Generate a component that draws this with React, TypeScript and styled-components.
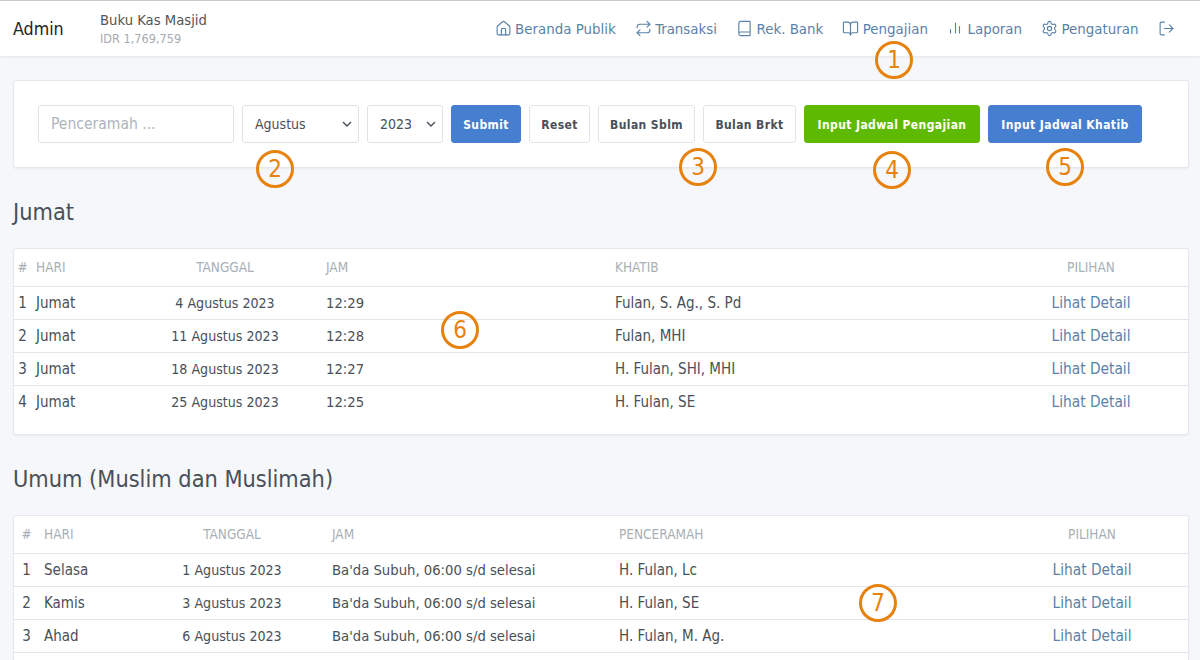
import styled, { createGlobalStyle } from 'styled-components'
import { House, Repeat, Book, BookOpen, Settings, LogOut } from 'lucide-react'
import type { ReactNode } from 'react'

const jumat = [
  ['1', 'Jumat', '4 Agustus 2023', '12:29', 'Fulan, S. Ag., S. Pd'],
  ['2', 'Jumat', '11 Agustus 2023', '12:28', 'Fulan, MHI'],
  ['3', 'Jumat', '18 Agustus 2023', '12:27', 'H. Fulan, SHI, MHI'],
  ['4', 'Jumat', '25 Agustus 2023', '12:25', 'H. Fulan, SE'],
]

const umum = [
  ['1', 'Selasa', '1 Agustus 2023', "Ba'da Subuh, 06:00 s/d selesai", 'H. Fulan, Lc'],
  ['2', 'Kamis', '3 Agustus 2023', "Ba'da Subuh, 06:00 s/d selesai", 'H. Fulan, SE'],
  ['3', 'Ahad', '6 Agustus 2023', "Ba'da Subuh, 06:00 s/d selesai", 'H. Fulan, M. Ag.'],
]

const chevron =
  "data:image/svg+xml,%3Csvg xmlns='http://www.w3.org/2000/svg' width='10' height='6' viewBox='0 0 10 6'%3E%3Cpath d='M1 1l4 4 4-4' fill='none' stroke='%23495057' stroke-width='1.4'/%3E%3C/svg%3E"

function BarsIcon() {
  return (
    <svg width="17" height="17" viewBox="0 0 17 17" fill="none" stroke="currentColor" strokeWidth="1.1" strokeLinecap="round">
      <path d="M3.5 9.5v3.5M8.5 3v10M12.5 6.5v6.5" />
    </svg>
  )
}

function NavItem({ icon, label }: { icon: ReactNode; label?: string }) {
  return (
    <NavLink>
      {icon}
      {label}
    </NavLink>
  )
}

function DataTable({ widths, person, rows, continues }: { widths: number[]; person: string; rows: string[][]; continues?: boolean }) {
  return (
    <TableCard>
      <Table>
        <colgroup>
          {widths.map((w, i) => <col key={i} width={w} />)}
        </colgroup>
        <thead>
          <tr>
            <Head $align="center">#</Head>
            <Head>HARI</Head>
            <Head $align="center">TANGGAL</Head>
            <Head>JAM</Head>
            <Head>{person}</Head>
            <Head $align="center">PILIHAN</Head>
          </tr>
        </thead>
        <tbody>
          {rows.map((r, i) => {
            const last = !continues && i === rows.length - 1
            return (
              <tr key={r[0]}>
                <Cell $align="center" $last={last}>{r[0]}</Cell>
                <Cell $last={last}>{r[1]}</Cell>
                <Cell $align="center" $last={last} $size={14.1}>{r[2]}</Cell>
                <Cell $last={last} $size={14.7}>{r[3]}</Cell>
                <Cell $last={last}>{r[4]}</Cell>
                <Cell $align="center" $last={last}><DetailLink>Lihat Detail</DetailLink></Cell>
              </tr>
            )
          })}
        </tbody>
      </Table>
    </TableCard>
  )
}

export default function App() {
  return (
    <>
      <GlobalStyle />
      <Page>
        <NavBar>
          <Brand>Admin</Brand>
          <Account>
            <AccountName>Buku Kas Masjid</AccountName>
            <AccountBalance>IDR 1,769,759</AccountBalance>
          </Account>
          <NavLinks>
            <NavItem icon={<House size={17} strokeWidth={1.6} />} label="Beranda Publik" />
            <NavItem icon={<Repeat size={17} strokeWidth={1.6} />} label="Transaksi" />
            <NavItem icon={<Book size={17} strokeWidth={1.6} />} label="Rek. Bank" />
            <NavItem icon={<BookOpen size={17} strokeWidth={1.6} />} label="Pengajian" />
            <NavItem icon={<BarsIcon />} label="Laporan" />
            <NavItem icon={<Settings size={17} strokeWidth={1.6} />} label="Pengaturan" />
            <NavItem icon={<LogOut size={17} strokeWidth={1.6} />} />
          </NavLinks>
        </NavBar>

        <Content>
          <FilterCard>
            <TextInput placeholder="Penceramah ..." />
            <Select $width={117}>
              <option>Agustus</option>
            </Select>
            <Select $width={76}>
              <option>2023</option>
            </Select>
            <Button $width={70} $variant="blue">Submit</Button>
            <Button $width={61}>Reset</Button>
            <Button $width={97}>Bulan Sblm</Button>
            <Button $width={93}>Bulan Brkt</Button>
            <Button $width={176} $variant="green">Input Jadwal Pengajian</Button>
            <Button $width={154} $variant="blue">Input Jadwal Khatib</Button>
          </FilterCard>

          <SectionTitle>Jumat</SectionTitle>
          <DataTable widths={[17, 98, 192, 289, 384, 194]} person="KHATIB" rows={jumat} />

          <SectionTitle>Umum (Muslim dan Muslimah)</SectionTitle>
          <DataTable widths={[25, 98, 190, 287, 382, 192]} person="PENCERAMAH" rows={umum} continues />
        </Content>

        <Marker $x={894} $y={60}>1</Marker>
        <Marker $x={275} $y={169}>2</Marker>
        <Marker $x={698} $y={167}>3</Marker>
        <Marker $x={892} $y={170}>4</Marker>
        <Marker $x={1065} $y={167}>5</Marker>
        <Marker $x={460} $y={330}>6</Marker>
        <Marker $x={878} $y={603}>7</Marker>
      </Page>
    </>
  )
}

const GlobalStyle = createGlobalStyle`
  html, body {
    margin: 0;
    height: 660px;
    overflow: hidden;
    background: #f5f7fb;
  }
  body {
    font-family: "DejaVu Sans", sans-serif;
    font-stretch: condensed;
    font-size: 15px;
    color: #495057;
  }
  * {
    box-sizing: border-box;
  }
`

const Page = styled.div`
  position: relative;
  height: 660px;
  overflow: hidden;
`

const NavBar = styled.header`
  display: flex;
  align-items: center;
  height: 56px;
  padding: 0 13px;
  background: #fff;
  border-top: 1px solid #c8c8c8;
  box-shadow: 0 1px 3px rgba(0, 0, 0, 0.08);
`

const Brand = styled.div`
  width: 87px;
  font-size: 17.7px;
  color: #222;
`

const Account = styled.div`
  display: flex;
  flex-direction: column;
  gap: 3px;
`

const AccountName = styled.div`
  font-size: 14.7px;
  color: #555;
`

const AccountBalance = styled.div`
  font-size: 12.6px;
  color: #a5abb2;
`

const NavLinks = styled.nav`
  display: flex;
  align-items: center;
  gap: 19px;
  margin-left: auto;
  padding-right: 12.5px;
`

const NavLink = styled.a`
  display: flex;
  align-items: center;
  gap: 3.5px;
  font-size: 14.9px;
  color: #5a82a8;
`

const Content = styled.main`
  padding: 24px 11px 0 13px;
`

const FilterCard = styled.section`
  display: flex;
  gap: 8px;
  height: 88px;
  align-items: center;
  padding: 0 24px;
  background: #fff;
  border: 1px solid #e6e8ec;
  border-radius: 3px;
  box-shadow: 0 1px 2px rgba(0, 0, 0, 0.05);
`

const TextInput = styled.input`
  flex: none;
  width: 196px;
  height: 38px;
  padding: 0 12px;
  border: 1px solid #dfe2e6;
  border-radius: 3px;
  font: inherit;
  color: #495057;
  &::placeholder {
    font-size: 15.5px;
    color: #adb5bd;
  }
`

const Select = styled.select<{ $width: number }>`
  flex: none;
  appearance: none;
  width: ${(p) => p.$width}px;
  height: 38px;
  padding: 0 12px;
  border: 1px solid #dfe2e6;
  border-radius: 3px;
  background: #fff url("${chevron}") no-repeat right 6px center;
  font: inherit;
  font-size: 14px;
  color: #495057;
`

const Button = styled.button<{ $variant?: 'blue' | 'green'; $width: number }>`
  flex: none;
  width: ${(p) => p.$width}px;
  height: 38px;
  padding: 1px 0 0;
  border: 1px solid ${(p) => (p.$variant === 'blue' ? '#467fcf' : p.$variant === 'green' ? '#5eba00' : '#e2e4e8')};
  border-radius: 3px;
  background: ${(p) => (p.$variant === 'blue' ? '#467fcf' : p.$variant === 'green' ? '#5eba00' : '#fff')};
  color: ${(p) => (p.$variant ? '#fff' : '#495057')};
  font: inherit;
  font-size: 12px;
  font-weight: 700;
  letter-spacing: 0.4px;
  white-space: nowrap;
`

const SectionTitle = styled.h2`
  margin: 30px 0 22px;
  font-size: 23.3px;
  font-weight: 400;
  line-height: 28px;
  color: #495057;
`

const TableCard = styled.section`
  padding-bottom: 16px;
  background: #fff;
  border: 1px solid #e6e8ec;
  border-radius: 3px;
  box-shadow: 0 1px 2px rgba(0, 0, 0, 0.05);
`

const Table = styled.table`
  width: 100%;
  table-layout: fixed;
  border-collapse: collapse;
`

const Head = styled.th<{ $align?: string }>`
  height: 37px;
  padding: 0 ${(p) => (p.$align ? '0' : '5px')};
  border-bottom: 1px solid #e3e5e9;
  text-align: ${(p) => p.$align || 'left'};
  font-size: 13.5px;
  font-weight: 400;
  color: #a9afb6;
`

const Cell = styled.td<{ $align?: string; $last?: boolean; $size?: number }>`
  height: 33px;
  padding: 0 ${(p) => (p.$align ? '0' : '5px')};
  text-align: ${(p) => p.$align || 'left'};
  border-bottom: ${(p) => (p.$last ? 'none' : '1px solid #e3e5e9')};
  font-size: ${(p) => p.$size || 15}px;
`

const DetailLink = styled.a`
  color: #5a82a8;
  font-size: 15.3px;
`

const Marker = styled.div<{ $x: number; $y: number }>`
  position: absolute;
  left: ${(p) => p.$x - 19}px;
  top: ${(p) => p.$y - 19}px;
  width: 38px;
  height: 38px;
  display: flex;
  align-items: center;
  justify-content: center;
  border: 3px solid #e8820e;
  border-radius: 50%;
  font-size: 24px;
  color: #e8820e;
`
